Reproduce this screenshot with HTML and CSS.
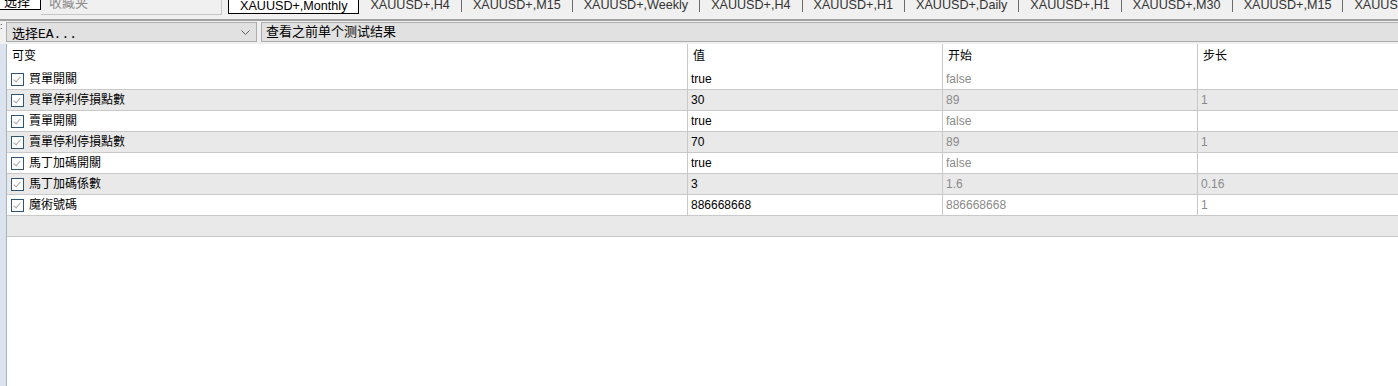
FILE: index.html
```html
<!DOCTYPE html>
<html lang="zh">
<head>
    <meta charset="UTF-8">
    <title>策略测试 - 参数</title>
    <link rel="stylesheet" href="styles.css">
</head>
<body>
    <div class="topbar">
        <div class="pick-btn">选择</div>
        <div class="fav-box">收藏夹</div>
        <div class="tabs">
            <div class="tab active">XAUUSD+,Monthly</div>
            <div class="tab">XAUUSD+,H4</div>
            <div class="tab">XAUUSD+,M15</div>
            <div class="tab">XAUUSD+,Weekly</div>
            <div class="tab">XAUUSD+,H4</div>
            <div class="tab">XAUUSD+,H1</div>
            <div class="tab">XAUUSD+,Daily</div>
            <div class="tab">XAUUSD+,H1</div>
            <div class="tab">XAUUSD+,M30</div>
            <div class="tab">XAUUSD+,M15</div>
            <div class="tab">XAUUSD+,M15</div>
        </div>
    </div>

    <div class="toolbar">
        <div class="grip">:</div>
        <div class="combo">
            <span>选择EA...</span>
            <svg class="chev" width="9" height="6" viewBox="0 0 9 6"><polyline points="0.5,0.5 4.5,4.5 8.5,0.5" fill="none" stroke="#606060" stroke-width="1"/></svg>
        </div>
        <div class="history-btn">查看之前单个测试结果</div>
    </div>

    <div class="main">
        <div class="side"></div>
        <div class="table">
            <div class="row head">
                <div class="cell">可变</div>
                <div class="cell">值</div>
                <div class="cell">开始</div>
                <div class="cell">步长</div>
            </div>
            <div class="row">
                <div class="cell name"><span class="check"></span>買單開關</div>
                <div class="cell">true</div>
                <div class="cell dim">false</div>
                <div class="cell dim"></div>
            </div>
            <div class="row">
                <div class="cell name"><span class="check"></span>買單停利停損點數</div>
                <div class="cell">30</div>
                <div class="cell dim">89</div>
                <div class="cell dim">1</div>
            </div>
            <div class="row">
                <div class="cell name"><span class="check"></span>賣單開關</div>
                <div class="cell">true</div>
                <div class="cell dim">false</div>
                <div class="cell dim"></div>
            </div>
            <div class="row">
                <div class="cell name"><span class="check"></span>賣單停利停損點數</div>
                <div class="cell">70</div>
                <div class="cell dim">89</div>
                <div class="cell dim">1</div>
            </div>
            <div class="row">
                <div class="cell name"><span class="check"></span>馬丁加碼開關</div>
                <div class="cell">true</div>
                <div class="cell dim">false</div>
                <div class="cell dim"></div>
            </div>
            <div class="row">
                <div class="cell name"><span class="check"></span>馬丁加碼係數</div>
                <div class="cell">3</div>
                <div class="cell dim">1.6</div>
                <div class="cell dim">0.16</div>
            </div>
            <div class="row">
                <div class="cell name"><span class="check"></span>魔術號碼</div>
                <div class="cell">886668668</div>
                <div class="cell dim">886668668</div>
                <div class="cell dim">1</div>
            </div>
            <div class="row empty"></div>
        </div>
    </div>
</body>
</html>
```

FILE: styles.css
```css
body {
    margin: 0;
    width: 1398px;
    height: 386px;
    overflow: hidden;
    background: #fff;
    font-family: "Liberation Sans", "Noto Sans CJK SC", sans-serif;
    font-size: 12px;
    color: #000;
}

.topbar {
    height: 19px;
    overflow: hidden;
    background: #f0f0f0;
    display: flex;
    align-items: flex-start;
}
.pick-btn {
    flex-shrink: 0;
    width: 41px;
    height: 17px;
    margin-top: -7px;
    box-sizing: border-box;
    border: 1px solid #000;
    border-left: none;
    background: #fff;
    font-size: 13px;
    line-height: 15px;
    padding-left: 4px;
}
.fav-box {
    flex-shrink: 0;
    width: 181px;
    height: 21px;
    margin-top: -6px;
    box-sizing: border-box;
    border-right: 1px solid #c6c6c6;
    border-bottom: 1px solid #c6c6c6;
    color: #8c8c8c;
    font-size: 13px;
    line-height: 17px;
    padding-left: 8px;
}
.tabs {
    display: flex;
    margin-left: 6px;
    margin-top: -3px;
    white-space: nowrap;
}
.tab {
    flex-shrink: 0;
    font-size: 12.6px;
    line-height: 17px;
    color: #333;
    padding: 0 11px;
    height: 15px;
    border-left: 1px solid #6a6a6a;
}
.tab.active {
    background: #fff;
    border: 1px solid #000;
    height: 15px;
    color: #000;
}
.tab.active + .tab {
    border-left: none;
}

.toolbar {
    border-top: 2px solid #a0a0a0;
    background: #f0f0f0;
    height: 25px;
    display: flex;
    align-items: flex-start;
    padding-top: 1px;
    box-sizing: border-box;
}
.grip {
    width: 6px;
    font-size: 9px;
    line-height: 8px;
    color: #333;
}
.combo {
    width: 251px;
    height: 20px;
    box-sizing: border-box;
    border: 1px solid #adadad;
    background: #e1e1e1;
    display: flex;
    align-items: center;
    justify-content: space-between;
    padding: 0 6px 0 5px;
    font-size: 13px;
}
.combo span {
    font-family: "Liberation Mono", "Noto Sans CJK SC", monospace;
}
.chev {
    margin-top: 1px;
}
.history-btn {
    flex: 1;
    margin-left: 4px;
    height: 20px;
    box-sizing: border-box;
    border: 1px solid #adadad;
    border-right: none;
    background: #e1e1e1;
    font-size: 13px;
    line-height: 18px;
    padding-left: 4px;
}

.main {
    display: flex;
    height: 342px;
}
.side {
    width: 6px;
    background: #dbe4ee;
    border-right: 1px solid #a9b3bd;
}
.table {
    flex: 1;
}
.row {
    display: grid;
    grid-template-columns: 680px 255px 255px 1fr;
    height: 21px;
    box-sizing: border-box;
    border-bottom: 1px solid #c9c9c9;
}
.row:nth-child(odd) {
    background: #e9e9e9;
}
.row.head {
    height: 25px;
    border-bottom: none;
    background: #fff;
}
.row.head .cell {
    line-height: 25px;
    padding-left: 5px;
}
.cell {
    line-height: 20px;
    padding-left: 3px;
    white-space: nowrap;
    overflow: hidden;
}
.cell + .cell {
    border-left: 1px solid #c9c9c9;
}
.cell.dim {
    color: #8a8a8a;
}
.cell.name {
    display: flex;
    align-items: center;
    padding-left: 4px;
}
.check {
    width: 11px;
    height: 11px;
    border: 1px solid #2f5575;
    background: #fff;
    margin-right: 5px;
    position: relative;
}
.check::after {
    content: "";
    position: absolute;
    left: 3px;
    top: 1px;
    width: 3px;
    height: 6px;
    border-right: 1px solid #a8a8a8;
    border-bottom: 1px solid #a8a8a8;
    transform: rotate(40deg);
}
.row.empty {
    background: #e9e9e9;
}
```
